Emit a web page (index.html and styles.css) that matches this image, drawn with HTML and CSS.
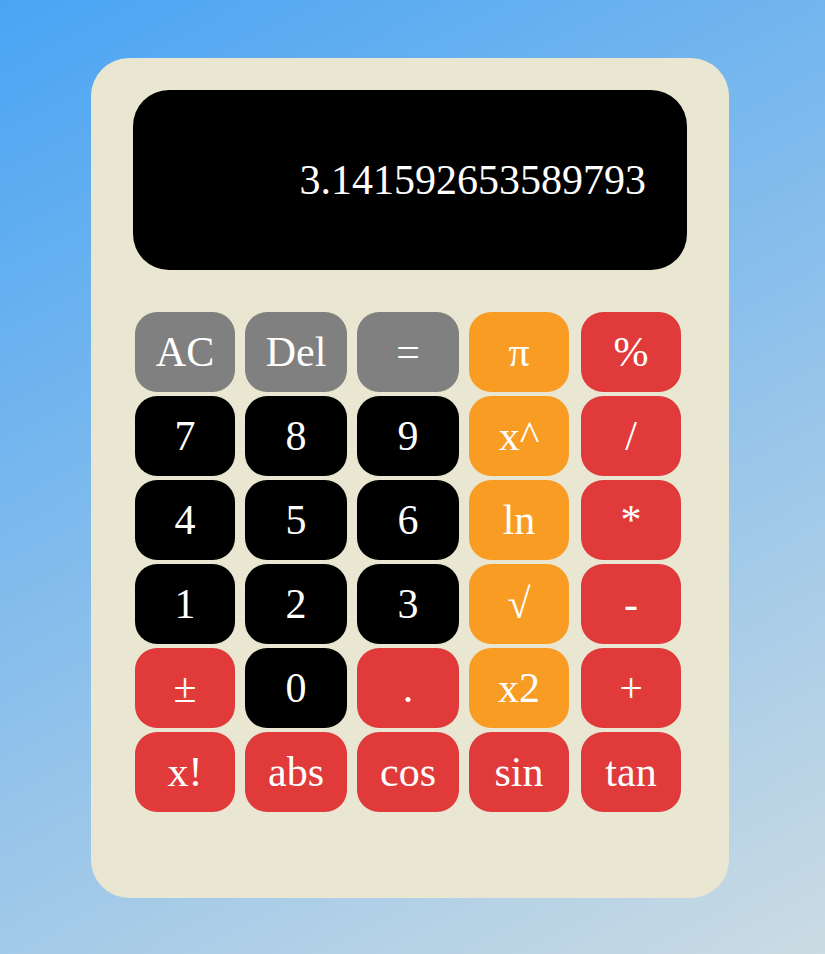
FILE: index.html
```html
<!DOCTYPE html>
<html>
<head>
<meta charset="utf-8">
<link rel="stylesheet" href="styles.css">
</head>
<body>
<div class="calc">
  <div class="display"><span class="value">3.141592653589793</span></div>
  <div class="keys">
    <button class="key gray">AC</button>
    <button class="key gray">Del</button>
    <button class="key gray">=</button>
    <button class="key orange">π</button>
    <button class="key red">%</button>

    <button class="key black">7</button>
    <button class="key black">8</button>
    <button class="key black">9</button>
    <button class="key orange">x^</button>
    <button class="key red">/</button>

    <button class="key black">4</button>
    <button class="key black">5</button>
    <button class="key black">6</button>
    <button class="key orange">ln</button>
    <button class="key red">*</button>

    <button class="key black">1</button>
    <button class="key black">2</button>
    <button class="key black">3</button>
    <button class="key orange">√</button>
    <button class="key red">-</button>

    <button class="key red">±</button>
    <button class="key black">0</button>
    <button class="key red">.</button>
    <button class="key orange">x2</button>
    <button class="key red">+</button>

    <button class="key red">x!</button>
    <button class="key red">abs</button>
    <button class="key red">cos</button>
    <button class="key red">sin</button>
    <button class="key red">tan</button>
  </div>
</div>
</body>
</html>
```

FILE: styles.css
```css
html, body {
  margin: 0;
  padding: 0;
}
body {
  width: 825px;
  height: 954px;
  background: linear-gradient(152deg, #4aa4f4 0%, #cbdbe3 100%);
  font-family: "Liberation Serif", "Times New Roman", serif;
  overflow: hidden;
}
.calc {
  box-sizing: border-box;
  width: 638px;
  height: 840px;
  margin: 58px 0 0 91px;
  padding: 32px 42px 86px;
  background: #e9e7d1;
  border-radius: 38px;
  display: flex;
  flex-direction: column;
}
.display {
  height: 180px;
  background: #000;
  border-radius: 36px;
  display: flex;
  align-items: center;
  justify-content: flex-end;
  padding-right: 41px;
  margin-bottom: 42px;
  color: #fff;
  font-size: 42px;
}
.keys {
  display: grid;
  grid-template-columns: 100px 102px 102px 102px 100px;
  grid-auto-rows: 80px;
  column-gap: 10px;
  row-gap: 4px;
  padding-left: 2px;
}
.key {
  border: none;
  margin: 0;
  padding: 0;
  width: 100%;
  height: 80px;
  border-radius: 22px;
  color: #fff;
  font-family: "Liberation Serif", "DejaVu Serif", serif;
  font-size: 42px;
  line-height: 1;
  cursor: pointer;
}
.keys .key:nth-child(5n+4) {
  width: 100px;
}
.gray { background: #808080; }
.black { background: #000; }
.orange { background: #f89c24; }
.red { background: #e03a3a; }
```
